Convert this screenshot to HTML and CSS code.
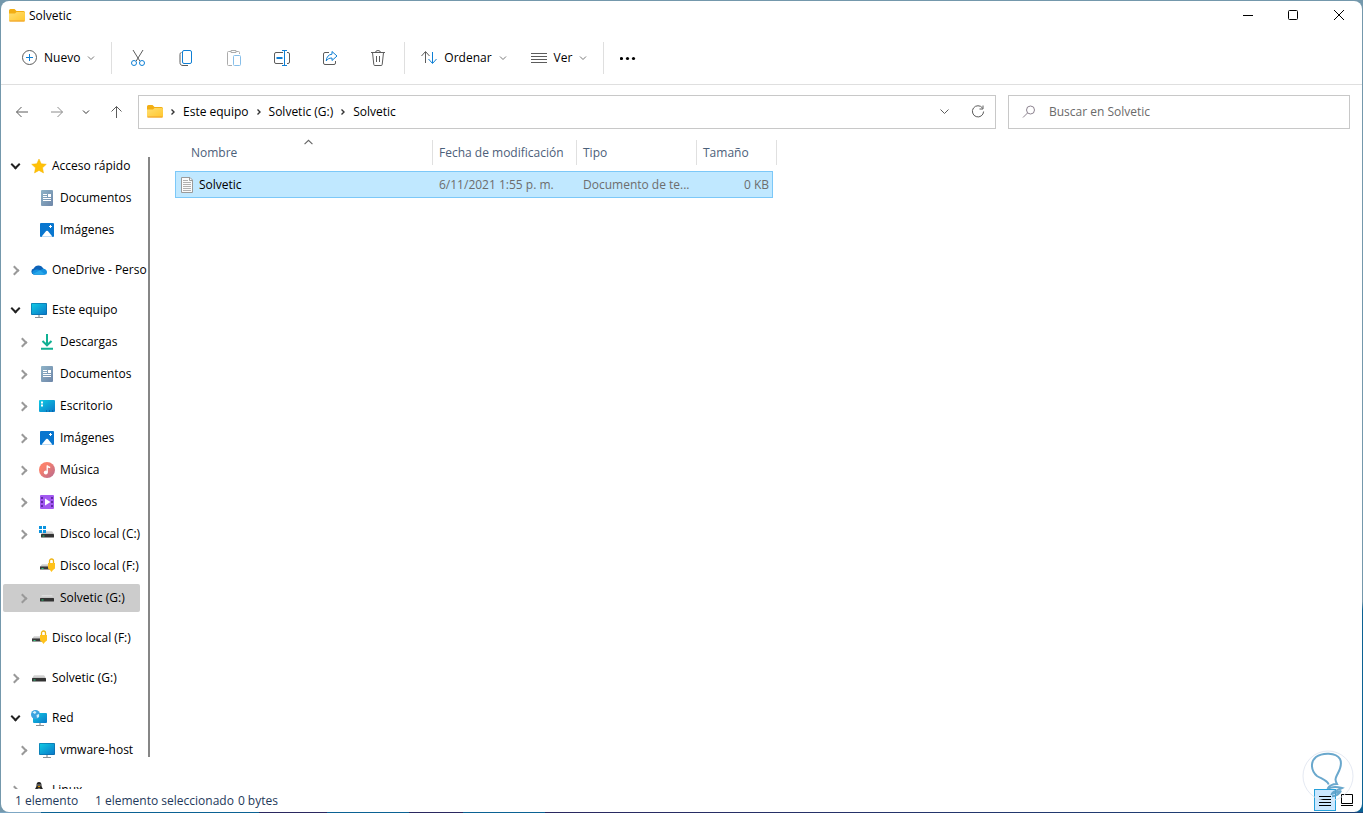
FILE: index.html
```html
<!DOCTYPE html>
<html lang="es">
<head>
    <meta charset="utf-8">
    <title>Solvetic</title>
    <link rel="stylesheet" href="styles.css">
</head>
<body>
    <!-- Shared icons -->
    <svg class="sprite" aria-hidden="true">
        <defs>
            <linearGradient id="g-folder" x1="0" y1="0" x2="1" y2="1"><stop offset="0" stop-color="#ffdf72"/><stop offset="1" stop-color="#ffc62c"/></linearGradient>
            <linearGradient id="g-screen" x1="0" y1="0" x2="1" y2="1"><stop offset="0" stop-color="#10cbe4"/><stop offset="1" stop-color="#0a78c8"/></linearGradient>
            <linearGradient id="g-doc" x1="0" y1="0" x2="1" y2="1"><stop offset="0" stop-color="#8fb4c8"/><stop offset="1" stop-color="#6e86a8"/></linearGradient>
            <linearGradient id="g-music" x1="0" y1="0" x2="1" y2="1"><stop offset="0.3" stop-color="#f9806c"/><stop offset="1" stop-color="#b56a90"/></linearGradient>
            <linearGradient id="g-drive" x1="0" y1="0" x2="0" y2="1"><stop offset="0" stop-color="#e4e4e4"/><stop offset="1" stop-color="#b8b8b8"/></linearGradient>
        </defs>
        <symbol id="folder" viewBox="0 0 16 16">
            <path d="M0 2.500a1.500 1.500 0 0 1 1.500-1.500h4L7.500 3H14.500A1.500 1.500 0 0 1 16 4.500v3H0z" fill="#f2ae13"/>
            <path d="M0 5.500H6L7.500 4H14.800A1.200 1.200 0 0 1 16 5.200V12.300A1.200 1.200 0 0 1 14.800 13.500H1.200A1.200 1.200 0 0 1 0 12.300z" fill="url(#g-folder)"/>
            <path d="M0.500 13h15" stroke="#ee9d2b"/>
        </symbol>
        <symbol id="chev-down" viewBox="0 0 8 8"><path d="M1 2.500l3 3 3-3" fill="none" stroke="currentColor"/></symbol>
        <symbol id="chev-right" viewBox="0 0 8 8"><path d="M2.500 1.500l2.500 2.500-2.500 2.500" fill="none" stroke="currentColor" stroke-width="1.400"/></symbol>
        <symbol id="star" viewBox="0 0 16 16"><path d="M8 1l2.200 4.700 5.100.6-3.800 3.500 1 5.100L8 12.400l-4.500 2.500 1-5.100L.7 6.300l5.100-.6z" fill="#ffc107" stroke="#f5b400" stroke-width=".5"/></symbol>
        <symbol id="doc" viewBox="0 0 16 16">
            <rect x="2" y="0" width="12" height="16" rx="1" fill="url(#g-doc)"/>
            <path d="M4 4.500h4M4 6.500h4M4 8.500h8M4 10.500h8" stroke="#fff"/><rect x="9" y="4" width="3" height="3" fill="#fff"/>
        </symbol>
        <symbol id="image" viewBox="0 0 16 16">
            <rect x="1" y="1" width="14" height="14" rx="1" fill="#0876cf"/>
            <path d="M2.500 14.700l4.600-5.600q.9-.8 1.800 0l4.600 5.600z" fill="#fff"/><path d="M11.500 3v3M10 4.500h3" stroke="#fff"/>
        </symbol>
        <symbol id="cloud" viewBox="0 0 16 16">
            <path d="M3 12.500A3 3 0 0 1 2.700 6.600 5.300 5.300 0 0 1 12.200 6.500 3.200 3.200 0 0 1 13 12.500z" fill="#0c62b8"/>
            <path d="M2.500 12.500C1 11.500.6 9.500 2.600 8.500 5 7 7.500 7.500 9 8.300l3-1.600c3 0 4 2 4 3.500a2.500 2.500 0 0 1-2.500 2.500H3.500z" fill="#1490df"/>
            <path d="M2 12l7-3.700 5 4.200H3z" fill="#28a8ea"/>
        </symbol>
        <symbol id="pc" viewBox="0 0 16 16">
            <path d="M7 13h2v2H7z" fill="#b8bcc0"/><path d="M4 15.500h8" stroke="#8a9096"/>
            <rect x="0" y="1" width="16" height="12" rx="1" fill="#0a67a3"/><rect x=".6" y="1.600" width="14.800" height="10.800" fill="url(#g-screen)"/>
        </symbol>
        <symbol id="download" viewBox="0 0 16 16"><path d="M8 0v11M3.500 7L8 11.300 12.500 7M2 14.800h12" fill="none" stroke="#10b093" stroke-width="2"/></symbol>
        <symbol id="desktop" viewBox="0 0 16 16">
            <rect x="0" y="2" width="16" height="12" rx="1" fill="url(#g-screen)"/>
            <path d="M2 4.500h2M2 7.500h2" stroke="#fff" stroke-width="2"/><path d="M7 13h1M10 13h1M13 13h1" stroke="#07508c"/>
        </symbol>
        <symbol id="music" viewBox="0 0 16 16">
            <circle cx="8" cy="8" r="8" fill="url(#g-music)"/><circle cx="6.800" cy="10.500" r="2" fill="#fff"/><path d="M8.200 10.500V3.500c.5 1.500 1.500 1.800 3 2" fill="none" stroke="#fff" stroke-width="1.300"/>
        </symbol>
        <symbol id="video" viewBox="0 0 16 16">
            <rect x="1" y="1" width="14" height="14" rx="1" fill="#a259f0"/>
            <path d="M3 3v11M13 3v11" stroke="#4d1a8c" stroke-width="1.500" stroke-dasharray="2 2"/><path d="M6 4.500l5.500 3.500L6 11.500z" fill="#fff"/>
        </symbol>
        <symbol id="drive" viewBox="0 0 16 16">
            <path d="M3 5h10l2 3.500H1z" fill="url(#g-drive)"/><rect x="1" y="8" width="14" height="3.500" rx=".5" fill="#333"/><path d="M2.500 10h2" stroke="#2ccb7d"/>
        </symbol>
        <symbol id="drive-c" viewBox="0 0 16 16">
            <path d="M4 5h9l2 3H2z" fill="url(#g-drive)"/><rect x="2" y="8" width="13" height="3.500" rx=".5" fill="#333"/><path d="M3.500 10h2" stroke="#2ccb7d"/>
            <path d="M0 0h3v3H0zM4 0h3v3H4zM0 4h3v3H0zM4 4h3v3H4z" fill="#0a93df"/>
        </symbol>
        <symbol id="drive-lock" viewBox="0 0 16 16">
            <path d="M3 6h8l1 3H1z" fill="url(#g-drive)"/><rect x="1" y="8.500" width="10" height="3" fill="#3a3a3a"/><path d="M2.500 10.500h2" stroke="#2ccb7d"/>
            <path d="M10.500 6V3a2 2 0 0 1 4 0v3" fill="none" stroke="#eeb413" stroke-width="1.300"/>
            <path d="M9 5h7v5.500l-2 1.500-1.500 2-1.500-2-2-1.500z" fill="#ffc21c"/>
        </symbol>
        <symbol id="network" viewBox="0 0 16 16">
            <path d="M8 13h2v2H8z" fill="#b8bcc0"/><path d="M5 15.500h8" stroke="#8a9096"/>
            <rect x="2" y="3" width="14" height="10" rx="1" fill="url(#g-screen)"/>
            <circle cx="4.500" cy="4.500" r="4.500" fill="#3ba3df"/><path d="M1.500 2.500l2-1.500 2 1-1.500 2zM5.500 5l2.500-1v3l-2 1z" fill="#d2effa"/>
        </symbol>
        <symbol id="tux" viewBox="0 0 16 16">
            <path d="M8 0c2 0 2.500 1.500 2.500 3.500 0 2 2.500 4 2.500 7.500l-2 4H5l-2-4c0-3.500 2.500-5.500 2.500-7.500C5.500 1.500 6 0 8 0z" fill="#222"/>
            <ellipse cx="8" cy="10.500" rx="3" ry="4" fill="#fff"/><path d="M6.500 4h3L8 5.500z" fill="#f5a400"/><path d="M6.500 3h1M8.500 3h1" stroke="#fff"/>
        </symbol>
        <symbol id="textfile" viewBox="0 0 16 16">
            <path d="M2.500.5H11L13.500 3v12.500h-11z" fill="#fbfbfb" stroke="#9a9a9a"/><path d="M10.500.5v3h3" fill="none" stroke="#9a9a9a"/>
            <path d="M4 3.500h5M4 5.500h8M4 7.500h8M4 9.500h8M4 11.500h8M4 13.500h8" stroke="#b0b0b0"/>
        </symbol>
    </svg>

    <div class="window">
        <header class="titlebar">
            <svg class="icon"><use href="#folder"/></svg>
            <h1>Solvetic</h1>
            <div class="window-buttons">
                <button type="button" aria-label="Minimizar"><svg class="icon" viewBox="0 0 16 16"><path d="M4 7.500h10"/></svg></button>
                <button type="button" aria-label="Maximizar"><svg class="icon" viewBox="0 0 16 16"><rect x="3.500" y="2.500" width="9" height="9" rx="1"/></svg></button>
                <button type="button" aria-label="Cerrar"><svg class="icon" viewBox="0 0 16 16"><path d="M3 2l10 10M13 2L3 12"/></svg></button>
            </div>
        </header>

        <div class="toolbar">
            <button type="button" class="menu-button">
                <svg class="icon" viewBox="0 0 16 16"><circle cx="8.500" cy="7.500" r="7"/><path class="blue" d="M8.500 4v7M5 7.500h7"/></svg>
                Nuevo
                <svg class="chevron"><use href="#chev-down"/></svg>
            </button>
            <span class="separator"></span>
            <div class="tools">
                <button type="button" aria-label="Cortar"><svg class="icon" viewBox="0 0 16 16"><path d="M3 0l6.800 11M13 0L6.200 11"/><circle class="blue" cx="4" cy="13" r="2.500"/><circle class="blue" cx="12" cy="13" r="2.500"/></svg></button>
                <button type="button" aria-label="Copiar"><svg class="icon" viewBox="0 0 16 16"><path d="M3.500 2.500C2.500 2.500 2 3.500 2 4.500v8c0 2 1 3 3 3h5"/><rect class="blue" x="4.500" y="0.500" width="9" height="13" rx="1.500"/></svg></button>
                <button type="button" aria-label="Pegar" disabled><svg class="icon" viewBox="0 0 16 16"><path d="M5 1.500H2.500a1 1 0 0 0-1 1V14.500a1 1 0 0 0 1 1H6M10 1.500h2.500a1 1 0 0 1 1 1V4M5 .5h5v2H5z"/><rect class="blue" x="7.500" y="5.500" width="7" height="10" rx="1"/></svg></button>
                <button type="button" aria-label="Cambiar nombre"><svg class="icon" viewBox="0 0 16 16"><path d="M9 2.500H2a1.500 1.500 0 0 0-1.500 1.500v8A1.500 1.500 0 0 0 2 13.500h7M13 2.500h1a1.500 1.500 0 0 1 1.500 1.500v8a1.500 1.500 0 0 1-1.500 1.500h-1"/><path class="blue" d="M10.500 .5v15M8 .5h5M8 15.500h5"/><path class="blue bold" d="M2.500 8h6"/></svg></button>
                <button type="button" aria-label="Compartir"><svg class="icon" viewBox="0 0 16 16"><path d="M7 2.500H3A1.500 1.500 0 0 0 1.500 4v9A1.500 1.500 0 0 0 3 14.500h9a1.500 1.500 0 0 0 1.500-1.500v-2"/><path class="blue" d="M10 1.500l5 4.500-5 4.500V8C7 8 5.500 9 4.200 11 4.500 7 6.500 4.500 10 4.200z"/></svg></button>
                <button type="button" aria-label="Eliminar"><svg class="icon" viewBox="0 0 16 16"><path d="M1 2.500h14M2.500 2.500l1.300 12a1 1 0 0 0 1 1h6.400a1 1 0 0 0 1-1l1.300-12M5.500 2.500a2.500 2 0 0 1 5 0M6.500 6v6M9.500 6v6"/></svg></button>
            </div>
            <span class="separator"></span>
            <button type="button" class="menu-button">
                <svg class="icon" viewBox="0 0 16 16"><path d="M4.500 13V2M.5 6l4-4.500 4 4.500"/><path class="blue" d="M11.500 2v11M7.500 9l4 4.500 4-4.500"/></svg>
                Ordenar
                <svg class="chevron"><use href="#chev-down"/></svg>
            </button>
            <button type="button" class="menu-button view-menu">
                <svg class="icon" viewBox="0 0 16 16"><path d="M0 3.500h16M0 6.500h16M0 9.500h16M0 12.500h16"/></svg>
                Ver
                <svg class="chevron"><use href="#chev-down"/></svg>
            </button>
            <span class="separator"></span>
            <button type="button" class="menu-button" aria-label="Ver más"><svg class="icon" viewBox="0 0 16 16"><g class="dots"><circle cx="1.500" cy="8.500" r="1.600"/><circle cx="7.500" cy="8.500" r="1.600"/><circle cx="13.500" cy="8.500" r="1.600"/></g></svg></button>
        </div>

        <div class="navbar">
            <nav class="history">
                <button type="button" aria-label="Atrás"><svg class="icon" viewBox="0 0 16 16"><path d="M14 8H2.500M7.500 3l-5 5 5 5"/></svg></button>
                <button type="button" class="faded" aria-label="Adelante"><svg class="icon" viewBox="0 0 16 16"><path d="M3 8h11.500M9.500 3l5 5-5 5"/></svg></button>
                <button type="button" class="recent" aria-label="Recientes"><svg class="chevron"><use href="#chev-down"/></svg></button>
                <button type="button" aria-label="Subir"><svg class="icon" viewBox="0 0 16 16"><path d="M8.500 14V2.500M3.500 7.500l5-5 5 5"/></svg></button>
            </nav>
            <div class="address">
                <svg class="icon"><use href="#folder"/></svg>
                <svg class="chevron"><use href="#chev-right"/></svg>
                <a href="#">Este equipo</a>
                <svg class="chevron"><use href="#chev-right"/></svg>
                <a href="#">Solvetic (G:)</a>
                <svg class="chevron"><use href="#chev-right"/></svg>
                <a href="#">Solvetic</a>
                <div class="address-buttons">
                    <button type="button" aria-label="Ubicaciones anteriores"><svg class="icon" viewBox="0 0 16 16"><path d="M4.500 5.500l4 4 4-4"/></svg></button>
                    <button type="button" aria-label="Actualizar"><svg class="icon" viewBox="0 0 16 16"><path d="M12.500 4A5.600 5.600 0 1 0 13.600 7.500M13 1.500v3.500H9.500"/></svg></button>
                </div>
            </div>
            <label class="search">
                <svg class="icon" viewBox="0 0 16 16"><circle cx="9.500" cy="6" r="4"/><path d="M6.500 9L2 13.500"/></svg>
                <input type="text" placeholder="Buscar en Solvetic" aria-label="Buscar en Solvetic">
            </label>
        </div>

        <div class="content">
            <nav class="sidebar">
                <ul class="tree">
                    <li class="item open"><button type="button" class="toggle" aria-label="Contraer"></button><a href="#"><svg class="icon"><use href="#star"/></svg>Acceso rápido</a></li>
                    <li class="item child"><a href="#"><svg class="icon"><use href="#doc"/></svg>Documentos</a></li>
                    <li class="item child"><a href="#"><svg class="icon"><use href="#image"/></svg>Imágenes</a></li>
                </ul>
                <ul class="tree">
                    <li class="item"><button type="button" class="toggle" aria-label="Expandir"></button><a href="#"><svg class="icon"><use href="#cloud"/></svg>OneDrive - Perso</a></li>
                </ul>
                <ul class="tree">
                    <li class="item open"><button type="button" class="toggle" aria-label="Contraer"></button><a href="#"><svg class="icon"><use href="#pc"/></svg>Este equipo</a></li>
                    <li class="item child"><button type="button" class="toggle" aria-label="Expandir"></button><a href="#"><svg class="icon"><use href="#download"/></svg>Descargas</a></li>
                    <li class="item child"><button type="button" class="toggle" aria-label="Expandir"></button><a href="#"><svg class="icon"><use href="#doc"/></svg>Documentos</a></li>
                    <li class="item child"><button type="button" class="toggle" aria-label="Expandir"></button><a href="#"><svg class="icon"><use href="#desktop"/></svg>Escritorio</a></li>
                    <li class="item child"><button type="button" class="toggle" aria-label="Expandir"></button><a href="#"><svg class="icon"><use href="#image"/></svg>Imágenes</a></li>
                    <li class="item child"><button type="button" class="toggle" aria-label="Expandir"></button><a href="#"><svg class="icon"><use href="#music"/></svg>Música</a></li>
                    <li class="item child"><button type="button" class="toggle" aria-label="Expandir"></button><a href="#"><svg class="icon"><use href="#video"/></svg>Vídeos</a></li>
                    <li class="item child"><button type="button" class="toggle" aria-label="Expandir"></button><a href="#"><svg class="icon"><use href="#drive-c"/></svg>Disco local (C:)</a></li>
                    <li class="item child"><a href="#"><svg class="icon"><use href="#drive-lock"/></svg>Disco local (F:)</a></li>
                    <li class="item child selected"><button type="button" class="toggle" aria-label="Expandir"></button><a href="#"><svg class="icon"><use href="#drive"/></svg>Solvetic (G:)</a></li>
                </ul>
                <ul class="tree">
                    <li class="item"><a href="#"><svg class="icon"><use href="#drive-lock"/></svg>Disco local (F:)</a></li>
                </ul>
                <ul class="tree">
                    <li class="item"><button type="button" class="toggle" aria-label="Expandir"></button><a href="#"><svg class="icon"><use href="#drive"/></svg>Solvetic (G:)</a></li>
                </ul>
                <ul class="tree">
                    <li class="item open"><button type="button" class="toggle" aria-label="Contraer"></button><a href="#"><svg class="icon"><use href="#network"/></svg>Red</a></li>
                    <li class="item child"><button type="button" class="toggle" aria-label="Expandir"></button><a href="#"><svg class="icon"><use href="#pc"/></svg>vmware-host</a></li>
                </ul>
                <ul class="tree">
                    <li class="item"><button type="button" class="toggle" aria-label="Expandir"></button><a href="#"><svg class="icon"><use href="#tux"/></svg>Linux</a></li>
                </ul>
            </nav>
            <div class="splitter"></div>

            <main class="files">
                <table>
                    <thead>
                        <tr>
                            <th class="col-name">Nombre<svg class="sort" viewBox="0 0 8 8"><path d="M0.500 5.500l3.500-3.500 3.500 3.500"/></svg></th>
                            <th class="col-date">Fecha de modificación</th>
                            <th class="col-type">Tipo</th>
                            <th class="col-size">Tamaño</th>
                        </tr>
                    </thead>
                    <tbody>
                        <tr>
                            <td><a href="#" class="file"><svg class="icon"><use href="#textfile"/></svg>Solvetic</a></td>
                            <td>6/11/2021 1:55 p. m.</td>
                            <td>Documento de te...</td>
                            <td class="size">0 KB</td>
                        </tr>
                    </tbody>
                </table>
            </main>
        </div>

        <footer class="statusbar">
            <span class="count">1 elemento</span>
            <span class="selection">1 elemento seleccionado</span>
            <span>0 bytes</span>
            <div class="views">
                <button type="button" class="active" aria-label="Detalles"><svg class="icon" viewBox="0 0 16 16"><path d="M2 4.500h12M2 7.500h12M2 10.500h12M2 13.500h12"/></svg></button>
                <button type="button" aria-label="Iconos grandes"><svg class="icon" viewBox="0 0 16 16"><path d="M2.500 2.500h11v9h-11zM2 13.500h12"/></svg></button>
            </div>
        </footer>

        <svg class="watermark" viewBox="0 0 52 52">
            <circle cx="26" cy="26" r="25"/>
            <path d="M26.700 34.500C25 30 20 29 15 26 9 21 8 12 14 7 20 2.500 34 2 38 9c3 6-1 12-3 16-2 4-2 5 0 9-5 0-8 2-9.500 5"/>
            <path d="M26 38.700c5-2.700 10-1.700 14-.7-4 2-9 3-10 5.700 4-1 8-2 9-3-1 3-5 5.600-9 5.600"/>
        </svg>
    </div>
</body>
</html>
```
FILE: styles.css
```css
* {
    box-sizing: border-box;
}

/* The desktop shows as a thin edge around the window */
body {
    margin: 0;
    padding: 1px;
    height: 100vh;
    font-family: "Open Sans", "Noto Sans", sans-serif;
    font-size: 12px;
    line-height: 16px;
    color: #000;
    background:
        linear-gradient(to right, #7da7c4 3%, #0b6294 3%, #0b6294 19%, #2a2860 19%, #2a2860 24%, #0b6294 24%, #0b6294 30%, #2a2860 30%, #2a2860 34%, #0b6294 34%, #0b6294 40%, #2a2860 40%, #1d4378) bottom / 100% 1px no-repeat,
        linear-gradient(#7498ac 74%, #0b6294 75%) right / 8px 100% no-repeat,
        #7498ac;
}

button {
    display: flex;
    align-items: center;
    justify-content: center;
    padding: 0;
    border: none;
    background: none;
    font: inherit;
    color: inherit;
    cursor: pointer;
}

a {
    color: inherit;
    text-decoration: none;
}

.sprite {
    position: absolute;
    width: 0;
    height: 0;
}

.icon {
    width: 16px;
    height: 16px;
    flex: none;
    fill: none;
    stroke: none;
}

.chevron {
    width: 8px;
    height: 8px;
    flex: none;
}

.window {
    position: relative;
    display: flex;
    flex-direction: column;
    height: 100%;
    overflow: hidden;
    background: #fff;
    border-radius: 8px;
}

/* Title bar */
.titlebar {
    display: flex;
    align-items: center;
    gap: 4px;
    height: 29px;
    padding-left: 8px;
}

.titlebar h1 {
    margin: 0;
    font-size: 12px;
    font-weight: normal;
}

.window-buttons {
    display: flex;
    margin-left: auto;
}

.window-buttons button {
    width: 46px;
    height: 29px;
}

.window-buttons svg {
    stroke: #000;
}

/* Toolbar */
.toolbar {
    display: flex;
    align-items: center;
    height: 55px;
    padding: 2px 0 0 12px;
    border-bottom: 1px solid #dfdfdf;
}

.toolbar button {
    height: 32px;
}

.toolbar .icon,
.history .icon,
.address-buttons .icon {
    stroke: #5c5c5c;
}

.toolbar .blue {
    stroke: #0f7fd4;
}

.toolbar .bold {
    stroke-width: 2;
}

.toolbar .dots {
    fill: #000;
    stroke: none;
}

.menu-button {
    gap: 7px;
    padding: 0 8px;
}

.menu-button .chevron {
    color: #777;
}

.view-menu {
    margin-left: 8px;
}

.tools {
    display: flex;
    gap: 12px;
}

.tools button {
    width: 36px;
}

.tools button:disabled {
    opacity: 0.5;
}

.separator {
    width: 1px;
    height: 32px;
    margin: 0 8px;
    background: #dfdfdf;
}

/* Navigation row */
.navbar {
    display: flex;
    align-items: center;
    padding: 10px 12px 9px 5px;
}

.history {
    display: flex;
    gap: 2px;
    margin-right: 6px;
}

.history button {
    width: 32px;
    height: 32px;
}

.history .recent {
    width: 24px;
    color: #333;
}

.history .faded {
    opacity: 0.7;
}

.address,
.search {
    display: flex;
    align-items: center;
    height: 34px;
    border: 1px solid #c8c8c8;
}

.address {
    flex: 1;
    gap: 6px;
    padding-left: 8px;
}

.address .chevron {
    color: #333;
}

.address-buttons {
    display: flex;
    margin-left: auto;
}

.address-buttons button {
    width: 34px;
    height: 32px;
}

.search {
    flex: 0 0 342px;
    margin-left: 12px;
    padding-left: 12px;
    gap: 12px;
}

.search .icon {
    stroke: #8d8390;
}

.search input {
    flex: 1;
    min-width: 0;
    padding: 0;
    border: none;
    outline: none;
    background: none;
    font: inherit;
}

.search input::placeholder {
    color: #6a6a6a;
    opacity: 1;
}

/* Main area */
.content {
    flex: 1;
    display: flex;
    min-height: 0;
}

.sidebar {
    width: 147px;
    padding: 12px 8px 0 2px;
    overflow: hidden;
}

.tree {
    list-style: none;
    margin: 0 0 12px;
    padding: 0;
}

.item {
    display: flex;
    align-items: center;
    height: 28px;
    margin: 2px 0 4px;
    padding-left: 28px;
    white-space: nowrap;
    border-radius: 2px;
}

.item.child {
    padding-left: 36px;
}

.item a {
    display: flex;
    flex: none;
    align-items: center;
    gap: 5px;
}

.item.selected {
    background: #cccccc;
}

/* Expand arrow, drawn as a rotated corner */
.toggle {
    flex: none;
    width: 16px;
    height: 16px;
    margin: 0 8px 0 -24px;
}

.toggle::before {
    content: "";
    box-sizing: border-box;
    width: 7px;
    height: 7px;
    margin-left: -2px;
    border: solid #999;
    border-width: 2px 2px 0 0;
    transform: rotate(45deg);
}

.open .toggle::before {
    margin: -4px 0 0;
    border-color: #222;
    transform: rotate(135deg);
}

.splitter {
    width: 2px;
    margin: 19px 0 32px;
    background: #868686;
}

/* File list */
.files {
    flex: 1;
    padding-left: 25px;
}

table {
    width: 598px;
    table-layout: fixed;
    border-spacing: 0;
}

th {
    position: relative;
    height: 33px;
    padding: 0 0 4px 6px;
    font-weight: normal;
    text-align: left;
    color: #4c607a;
}

th::after {
    content: "";
    position: absolute;
    top: 2px;
    right: 0;
    width: 1px;
    height: 25px;
    background: #e0e0e0;
}

.col-name {
    width: 258px;
    padding-left: 16px;
}

.col-date {
    width: 144px;
}

.col-type {
    width: 120px;
}

.col-size::after {
    right: -4px;
}

.sort {
    position: absolute;
    top: 0;
    left: 50%;
    width: 9px;
    height: 9px;
    fill: none;
    stroke: #666;
}

tbody tr {
    background: #c0e8ff;
    outline: 1px solid #7cc8f8;
    outline-offset: -1px;
}

td {
    height: 27px;
    padding: 0 4px 0 6px;
    color: #6d6d6d;
    white-space: nowrap;
}

.file {
    display: flex;
    align-items: center;
    gap: 4px;
    margin-left: -2px;
    color: #000;
}

.size {
    text-align: right;
}

/* Status bar */
.statusbar {
    display: flex;
    align-items: center;
    height: 23px;
    padding: 0 4px 0 14px;
    color: #1e395b;
}

.count {
    width: 80px;
}

.selection {
    margin-right: 4px;
}

.views {
    display: flex;
    align-self: flex-start;
    margin-left: auto;
}

.views button {
    width: 22px;
    height: 22px;
}

.views .active {
    background: #cce8ff;
    border: 1px solid #26a0da;
}

.views svg {
    stroke: #000;
}

.watermark {
    position: absolute;
    right: 8px;
    bottom: 10px;
    width: 52px;
    height: 52px;
    fill: none;
    stroke: #5a9fc8;
    stroke-width: 2;
    pointer-events: none;
    opacity: 0.9;
}

.watermark circle {
    stroke: #e3e8f2;
    stroke-width: 1;
}
```
